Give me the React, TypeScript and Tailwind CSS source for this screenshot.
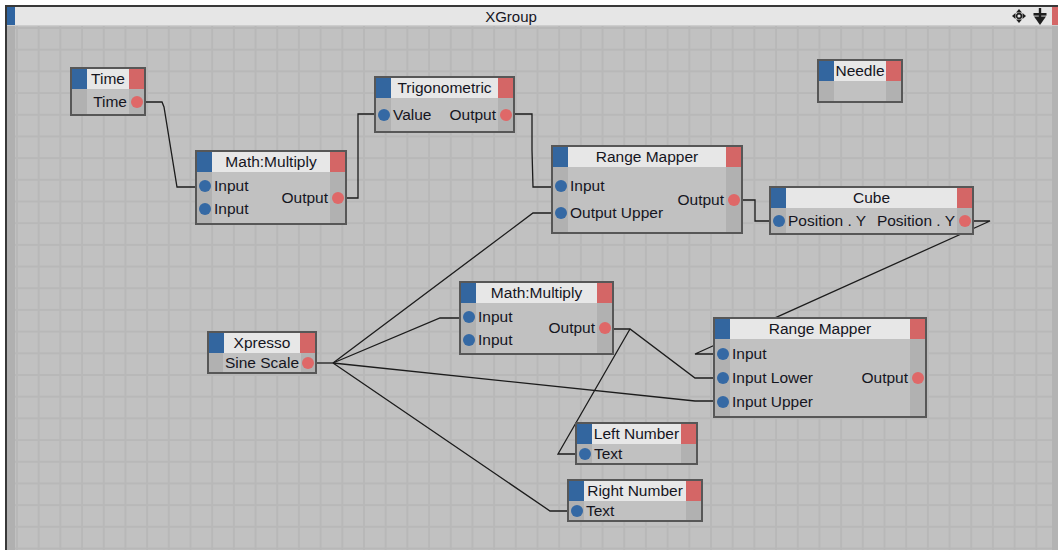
import React from 'react'

type XNode = {
  title: string
  x: number
  y: number
  w: number
  body: number
  pitch?: number
  inputs: string[]
  outputs: string[]
}

const nodes: XNode[] = [
  { title: 'Time', x: 70, y: 67, w: 76, body: 25, inputs: [], outputs: ['Time'] },
  { title: 'Math:Multiply', x: 195, y: 150, w: 152, body: 51, pitch: 23, inputs: ['Input', 'Input'], outputs: ['Output'] },
  { title: 'Trigonometric', x: 374, y: 76, w: 141, body: 33, inputs: ['Value'], outputs: ['Output'] },
  { title: 'Range Mapper', x: 551, y: 145, w: 192, body: 65, pitch: 27, inputs: ['Input', 'Output Upper'], outputs: ['Output'] },
  { title: 'Needle', x: 817, y: 59, w: 86, body: 20, inputs: [], outputs: [] },
  { title: 'Cube', x: 769, y: 186, w: 205, body: 25, inputs: ['Position . Y'], outputs: ['Position . Y'] },
  { title: 'Xpresso', x: 207, y: 331, w: 110, body: 19, inputs: [], outputs: ['Sine Scale'] },
  { title: 'Math:Multiply', x: 459, y: 281, w: 155, body: 50, pitch: 23, inputs: ['Input', 'Input'], outputs: ['Output'] },
  { title: 'Range Mapper', x: 713, y: 317, w: 214, body: 77, pitch: 24, inputs: ['Input', 'Input Lower', 'Input Upper'], outputs: ['Output'] },
  { title: 'Left Number', x: 575, y: 422, w: 123, body: 19, inputs: ['Text'], outputs: [] },
  { title: 'Right Number', x: 567, y: 479, w: 136, body: 19, inputs: ['Text'], outputs: [] },
]

// wires in page coordinates, drawn under the nodes
const wires: number[][] = [
  [145, 102, 162, 102, 164, 107, 177, 187, 198, 187],
  [346, 198, 358, 198, 358, 114, 378, 114],
  [514, 114, 532, 114, 532, 150, 533, 187, 555, 187],
  [742, 200, 755, 200, 755, 221, 773, 221],
  [973, 221, 990, 221, 695, 354, 717, 354],
  [316, 363, 333, 363],
  [333, 363, 533, 213, 555, 213],
  [333, 363, 440, 318, 463, 318],
  [333, 363, 695, 401, 717, 401],
  [333, 363, 550, 511, 571, 511],
  [613, 329, 630, 329, 695, 378, 717, 378],
  [630, 329, 558, 454, 579, 454],
]

const ROW = 20

const Node = ({ n }: { n: XNode }) => {
  const gap = (n.pitch ?? ROW) - ROW
  return (
    <div
      className="absolute border-2 border-[#575757] bg-[#c1c1c1]"
      style={{ left: n.x, top: n.y, width: n.w }}
    >
      <div className="flex h-[20px]">
        <div className="w-[15px] bg-[#33669f]" />
        <div className="flex-1 bg-[#e7e7e7] text-center leading-[20px] whitespace-nowrap">{n.title}</div>
        <div className="w-[15px] bg-[#d46666]" />
      </div>
      <div className="flex" style={{ height: n.body }}>
        <div className="w-[15px] bg-[#b1b1b1] flex flex-col justify-center items-center" style={{ gap }}>
          {n.inputs.map((_, i) => (
            <div key={i} className="h-[20px] flex items-center">
              <span className="block size-[12px] rounded-full bg-[#3569a4]" />
            </div>
          ))}
        </div>
        <div className="flex-1 flex justify-between px-[2px] whitespace-nowrap">
          <div className="flex flex-col justify-center" style={{ gap }}>
            {n.inputs.map((t, i) => (
              <div key={i} className="h-[20px] leading-[20px]">{t}</div>
            ))}
          </div>
          <div className="flex flex-col justify-center items-end" style={{ gap }}>
            {n.outputs.map((t, i) => (
              <div key={i} className="h-[20px] leading-[20px]">{t}</div>
            ))}
          </div>
        </div>
        <div className="w-[15px] bg-[#b1b1b1] flex flex-col justify-center items-center">
          {n.outputs.map((_, i) => (
            <div key={i} className="h-[20px] flex items-center">
              <span className="block size-[12px] rounded-full bg-[#df6868]" />
            </div>
          ))}
        </div>
      </div>
    </div>
  )
}

const MoveIcon = () => (
  <svg width="14" height="14" viewBox="0 0 14 14">
    <polygon points="7,0 4,3.5 10,3.5" fill="#1e1e1e" />
    <polygon points="7,14 4,10.5 10,10.5" fill="#1e1e1e" />
    <polygon points="0,7 3.5,4 3.5,10" fill="#1e1e1e" />
    <polygon points="14,7 10.5,4 10.5,10" fill="#1e1e1e" />
    <circle cx="7" cy="7" r="2.4" fill="none" stroke="#1e1e1e" strokeWidth="1.6" />
  </svg>
)

const DropIcon = () => (
  <svg width="14" height="17" viewBox="0 0 14 17">
    <rect x="5.8" y="0" width="2.4" height="9" fill="#1e1e1e" />
    <rect x="0.5" y="5" width="13" height="2.6" fill="#1e1e1e" />
    <polygon points="1,8.5 13,8.5 7,17" fill="#1e1e1e" />
  </svg>
)

export default function App() {
  return (
    <div className="relative w-[1058px] h-[550px] overflow-hidden bg-white pl-[5px] pt-[5px] font-['Liberation_Sans',Arial,sans-serif] text-[15.5px] text-[#15151e]">
      <div className="h-full flex flex-col border-l-2 border-t-2 border-[#383838]">
        {/* title bar */}
        <div className="flex h-[19px] bg-[#e6e6e6] border-b border-[#cdcdcd]">
          <div className="w-[8px] bg-[#2f64a0]" />
          <div className="flex-1 flex justify-center items-center pr-[5px] leading-none text-[15px]">XGroup</div>
          <div className="flex items-center gap-[7px] pr-[5px]">
            <MoveIcon />
            <DropIcon />
          </div>
          <div className="w-[6px] bg-[#d46666]" />
        </div>
        {/* canvas */}
        <div className="flex-1 flex">
          <div className="w-[8px] bg-[#b0b0b0]" />
          <div className="flex-1 bg-[#c1c1c1] bg-[linear-gradient(to_right,#b8b8b8_2px,transparent_2px),linear-gradient(to_bottom,#b8b8b8_2px,transparent_2px)] bg-size-[21.7px_21.7px] bg-position-[1px_1px]" />
          <div className="w-[6px] bg-[#b3b3b3]" />
        </div>
      </div>

      {/* node graph */}
      <div className="absolute inset-0">
        <svg className="absolute inset-0" width="1058" height="550">
          {wires.map((w, i) => (
            <polyline key={i} points={w.join(' ')} fill="none" stroke="#1c1c1c" strokeWidth="1.3" />
          ))}
        </svg>
        {nodes.map((n, i) => (
          <Node key={i} n={n} />
        ))}
      </div>
    </div>
  )
}
